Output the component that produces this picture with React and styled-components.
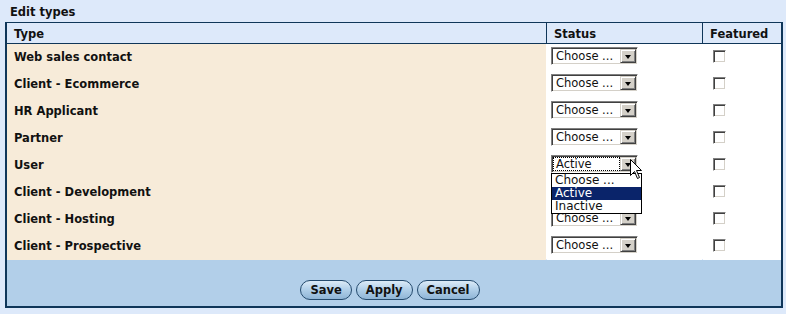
import React from "react";
import styled, { createGlobalStyle } from "styled-components";

const GlobalStyle = createGlobalStyle`
  html, body {
    margin: 0;
    padding: 0;
    background: #dde9fa;
  }
  body {
    font-family: "DejaVu Sans", Verdana, sans-serif;
    font-size: 11px;
    color: #111;
  }
`;

const types = [
  { name: "Web sales contact", status: "Choose ..." },
  { name: "Client - Ecommerce", status: "Choose ..." },
  { name: "HR Applicant", status: "Choose ..." },
  { name: "Partner", status: "Choose ..." },
  { name: "User", status: "Active", open: true },
  { name: "Client - Development", status: "Choose ..." },
  { name: "Client - Hosting", status: "Choose ..." },
  { name: "Client - Prospective", status: "Choose ..." },
];

const options = ["Choose ...", "Active", "Inactive"];

const App = () => {
  return (
    <Page>
      <GlobalStyle />
      <Title>Edit types</Title>
      <Panel>
        <HeaderRow>
          <HeadCell>Type</HeadCell>
          <HeadCell>Status</HeadCell>
          <HeadCell>Featured</HeadCell>
        </HeaderRow>
        <Body>
          {types.map((t) => (
            <Row key={t.name}>
              <TypeCell>{t.name}</TypeCell>
              <StatusCell>
                <SelectBox>
                  <SelectText focused={t.open}>{t.status}</SelectText>
                  <ArrowButton>
                    <Triangle />
                  </ArrowButton>
                </SelectBox>
                {t.open && (
                  <>
                    <DropList>
                      {options.map((o) => (
                        <DropItem key={o} selected={o === t.status}>
                          {o}
                        </DropItem>
                      ))}
                    </DropList>
                    <Cursor width="13" height="21" viewBox="0 0 13 21">
                      <path
                        d="M0.5 0.5 L0.5 16.5 L4.5 12.5 L7.5 19.5 L9.5 18.5 L6.5 11.5 L11.5 11.5 Z"
                        fill="#fff"
                        stroke="#000"
                        strokeWidth="1"
                      />
                    </Cursor>
                  </>
                )}
              </StatusCell>
              <FeaturedCell>
                <CheckBox />
              </FeaturedCell>
            </Row>
          ))}
        </Body>
        <Footer>
          <Button>Save</Button>
          <Button>Apply</Button>
          <Button>Cancel</Button>
        </Footer>
      </Panel>
    </Page>
  );
};

const Page = styled.div`
  width: 786px;
  height: 314px;
  overflow: hidden;
`;

const Title = styled.div`
  font-weight: bold;
  font-size: 11.5px;
  padding: 5px 0 0 10px;
  height: 22px;
  box-sizing: border-box;
  line-height: 14px;
`;

const Panel = styled.div`
  margin-left: 5px;
  width: 778px;
  box-sizing: border-box;
  border: 2px solid #0f3659;
  border-top-width: 1px;
`;

const HeaderRow = styled.div`
  display: grid;
  grid-template-columns: 539px 155px 78px;
  column-gap: 1px;
  background: #0f3659;
  border-bottom: 1px solid #0f3659;
`;

const HeadCell = styled.div`
  background: #dde9fa;
  height: 20px;
  line-height: 22px;
  padding-left: 7px;
  font-weight: bold;
  font-size: 11.5px;
`;

const Body = styled.div`
  background: #fff;
`;

const Row = styled.div`
  display: grid;
  grid-template-columns: 539px 155px 78px;
  column-gap: 1px;
  height: 26px;
  margin-bottom: 1px;
`;

const TypeCell = styled.div`
  background: #f7ebd9;
  font-weight: bold;
  font-size: 11.5px;
  padding-left: 7px;
  line-height: 27px;
`;

const StatusCell = styled.div`
  position: relative;
  background: #fff;
  padding: 3px 0 0 4px;
`;

const FeaturedCell = styled.div`
  background: #fff;
  padding: 6px 0 0 10px;
`;

const SelectBox = styled.div`
  width: 87px;
  height: 18px;
  box-sizing: border-box;
  display: flex;
  align-items: stretch;
  background: #fff;
  border-top: 1px solid #808080;
  border-left: 1px solid #808080;
  border-right: 1px solid #fff;
  border-bottom: 1px solid #fff;
  box-shadow: inset 1px 1px 0 #404040, inset -1px -1px 0 #d4d0c8;
  padding: 1px;
`;

const SelectText = styled.div`
  flex: 1;
  line-height: 14px;
  padding-left: 3px;
  font-size: 11.5px;
  outline: ${(p) => (p.focused ? "1px dotted #000" : "none")};
  outline-offset: -1px;
  white-space: nowrap;
  overflow: hidden;
`;

const ArrowButton = styled.div`
  width: 16px;
  box-sizing: border-box;
  background: #d4d0c8;
  border-top: 1px solid #d4d0c8;
  border-left: 1px solid #d4d0c8;
  border-right: 1px solid #404040;
  border-bottom: 1px solid #404040;
  box-shadow: inset 1px 1px 0 #fff, inset -1px -1px 0 #808080;
  display: flex;
  align-items: center;
  justify-content: center;
`;

const Triangle = styled.div`
  width: 0;
  height: 0;
  border-left: 3px solid transparent;
  border-right: 3px solid transparent;
  border-top: 4px solid #000;
  margin-top: 1px;
`;

const DropList = styled.div`
  position: absolute;
  left: 4px;
  top: 21px;
  width: 91px;
  box-sizing: border-box;
  border: 1px solid #000;
  background: #fff;
  z-index: 2;
`;

const DropItem = styled.div`
  height: 13px;
  line-height: 13px;
  padding-left: 3px;
  font-size: 12px;
  background: ${(p) => (p.selected ? "#0a246a" : "#fff")};
  color: ${(p) => (p.selected ? "#fff" : "#111")};
`;

const Cursor = styled.svg`
  position: absolute;
  left: 83px;
  top: 7px;
  z-index: 3;
`;

const CheckBox = styled.div`
  width: 13px;
  height: 13px;
  box-sizing: border-box;
  background: #fff;
  border-top: 1px solid #808080;
  border-left: 1px solid #808080;
  border-right: 1px solid #fff;
  border-bottom: 1px solid #fff;
  box-shadow: inset 1px 1px 0 #404040, inset -1px -1px 0 #d4d0c8;
`;

const Footer = styled.div`
  background: #b2cfe9;
  height: 46px;
  box-sizing: border-box;
  padding: 20px 8px 0 0;
  display: flex;
  justify-content: center;
  align-items: flex-start;
  gap: 4px;
`;

const Button = styled.button`
  font-family: "DejaVu Sans", Verdana, sans-serif;
  font-size: 11.5px;
  font-weight: bold;
  color: #111;
  height: 20px;
  padding: 0 9px;
  border: 1px solid #244a6d;
  border-radius: 10px;
  background: linear-gradient(#dcebf7, #b3d1ea 45%, #8fb5d6);
  cursor: pointer;
`;

export default App;
